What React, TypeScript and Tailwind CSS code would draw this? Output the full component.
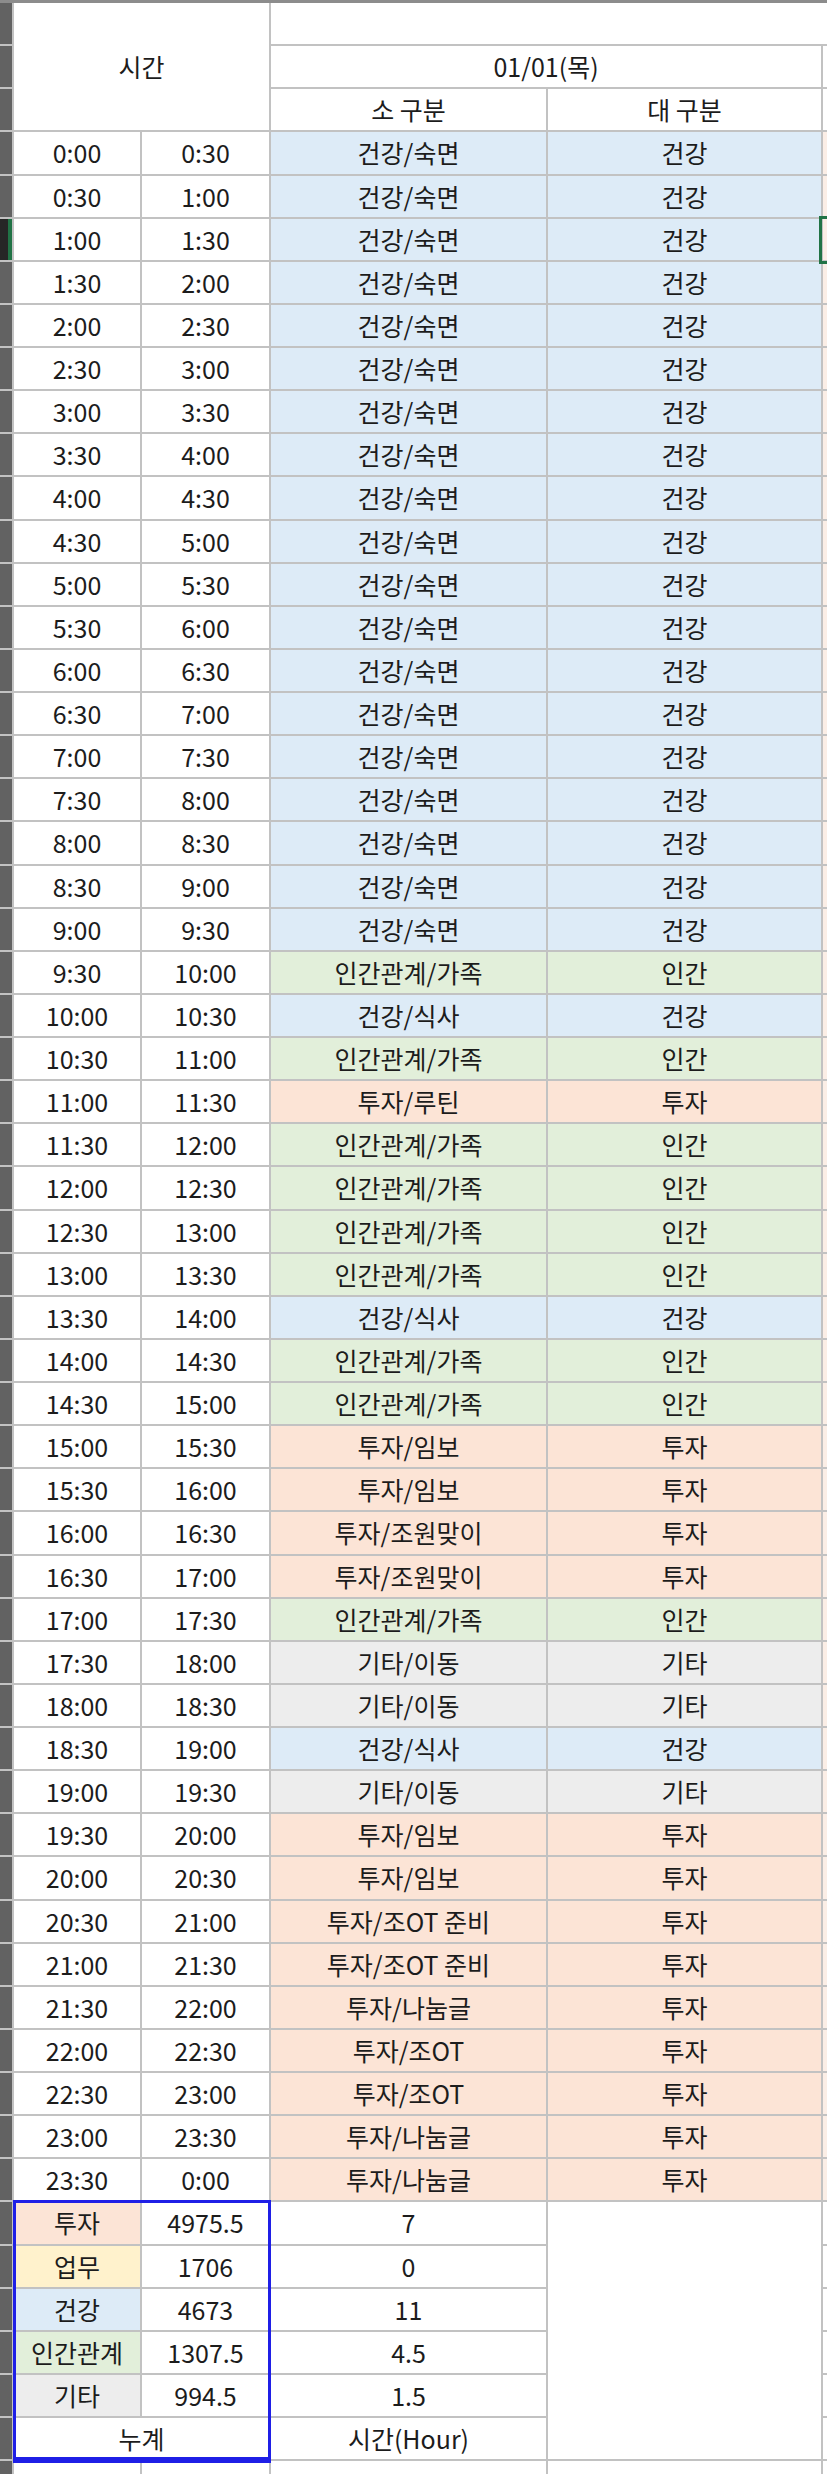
import React from "react";

type Cat = "b" | "g" | "p" | "x" | "y";

const bgOf: Record<Cat, string> = {
  b: "bg-[#ddebf7]",
  g: "bg-[#e2efda]",
  p: "bg-[#fce4d6]",
  x: "bg-[#ededed]",
  y: "bg-[#fff2cc]",
};

const fmt = (i: number) => {
  const n = i % 48;
  return `${Math.floor(n / 2)}:${n % 2 ? "30" : "00"}`;
};

const tail: [string, string, Cat][] = [
  ["인간관계/가족", "인간", "g"],
  ["건강/식사", "건강", "b"],
  ["인간관계/가족", "인간", "g"],
  ["투자/루틴", "투자", "p"],
  ["인간관계/가족", "인간", "g"],
  ["인간관계/가족", "인간", "g"],
  ["인간관계/가족", "인간", "g"],
  ["인간관계/가족", "인간", "g"],
  ["건강/식사", "건강", "b"],
  ["인간관계/가족", "인간", "g"],
  ["인간관계/가족", "인간", "g"],
  ["투자/임보", "투자", "p"],
  ["투자/임보", "투자", "p"],
  ["투자/조원맞이", "투자", "p"],
  ["투자/조원맞이", "투자", "p"],
  ["인간관계/가족", "인간", "g"],
  ["기타/이동", "기타", "x"],
  ["기타/이동", "기타", "x"],
  ["건강/식사", "건강", "b"],
  ["기타/이동", "기타", "x"],
  ["투자/임보", "투자", "p"],
  ["투자/임보", "투자", "p"],
  ["투자/조OT 준비", "투자", "p"],
  ["투자/조OT 준비", "투자", "p"],
  ["투자/나눔글", "투자", "p"],
  ["투자/조OT", "투자", "p"],
  ["투자/조OT", "투자", "p"],
  ["투자/나눔글", "투자", "p"],
  ["투자/나눔글", "투자", "p"],
];

const data: [string, string, Cat][] = [
  ...Array.from({ length: 19 }, () => ["건강/숙면", "건강", "b"] as [string, string, Cat]),
  ...tail,
];

const summary: [string, string, Cat, string][] = [
  ["투자", "4975.5", "p", "7"],
  ["업무", "1706", "y", "0"],
  ["건강", "4673", "b", "11"],
  ["인간관계", "1307.5", "g", "4.5"],
  ["기타", "994.5", "x", "1.5"],
];

const cell = "flex items-center justify-center whitespace-nowrap leading-none";

function Strip({ selected }: { selected?: boolean }) {
  return selected ? (
    <div className="bg-[#262626] border-r-[4px] border-[#217346]" />
  ) : (
    <div className="bg-[#626262]" />
  );
}

export default function App() {
  return (
    <div
      className="relative w-[827px] h-[2474px] overflow-hidden bg-white text-[25px] text-[#1c1c1c]"
      style={{ fontFamily: '"Noto Sans CJK KR", "Noto Sans", sans-serif' }}
    >
      <div className="h-[3px] bg-[#8c8c8c]" />
      <div className="grid grid-cols-[12px_126px_127px_275px_273px_4px] grid-rows-[repeat(58,41.14px)] gap-[2px] bg-[#c2c2c2]">
        {/* header row 1 */}
        <Strip />
        <div className={`${cell} col-span-2 row-span-3 bg-white`}>시간</div>
        <div className="col-span-3 bg-white" />
        {/* header row 2 */}
        <Strip />
        <div className={`${cell} col-span-2 bg-white`}>01/01(목)</div>
        <div className="bg-white" />
        {/* header row 3 */}
        <Strip />
        <div className={`${cell} bg-white`}>소 구분</div>
        <div className={`${cell} bg-white`}>대 구분</div>
        <div className="bg-white" />

        {data.map(([small, big, c], i) => (
          <React.Fragment key={i}>
            <Strip selected={i === 2} />
            <div className={`${cell} bg-white`}>{fmt(i)}</div>
            <div className={`${cell} bg-white`}>{fmt(i + 1)}</div>
            <div className={`${cell} ${bgOf[c]}`}>{small}</div>
            <div className={`${cell} ${bgOf[c]}`}>{big}</div>
            <div className="bg-[#fbeee6]" />
          </React.Fragment>
        ))}

        {summary.map(([label, value, c, hours], i) => (
          <React.Fragment key={label}>
            <Strip />
            <div className={`${cell} ${bgOf[c]}`}>{label}</div>
            <div className={`${cell} bg-white`}>{value}</div>
            <div className={`${cell} bg-white`}>{hours}</div>
            {i === 0 && <div className="row-span-6 bg-white" />}
            <div className="bg-white" />
          </React.Fragment>
        ))}
        <Strip />
        <div className={`${cell} col-span-2 bg-white`}>누계</div>
        <div className={`${cell} bg-white`}>시간(Hour)</div>
        <div className="bg-white" />

        {/* partial row below */}
        <Strip />
        <div className="bg-white" />
        <div className="bg-white" />
        <div className="bg-white" />
        <div className="bg-white" />
        <div className="bg-white" />
      </div>

      {/* Excel selection overlays */}
      <div className="absolute left-[13px] top-[2200px] w-[258px] h-[263px] border-[3px] border-b-[6px] border-[#1f1fe6]" />
      <div className="absolute left-[819px] top-[216px] w-[10px] h-[48px] border-[3px] border-r-0 border-[#217346]" />
    </div>
  );
}
